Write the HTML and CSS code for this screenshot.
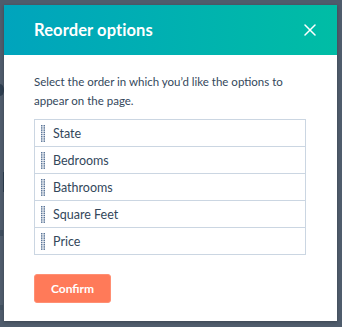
FILE: index.html
```html
<!DOCTYPE html>
<html>
<head>
<meta charset="utf-8">
<link rel="stylesheet" href="styles.css">
</head>
<body>
<div class="backdrop">
  <span class="ghost ghost-dot"></span>
  <span class="ghost ghost-line"></span>
  <span class="ghost ghost-a"></span>
  <span class="ghost ghost-w"></span>
  <div class="modal">
    <div class="header">
      <h1 class="title">Reorder options</h1>
      <button class="close" aria-label="Close">
        <svg width="12" height="12" viewBox="0 0 12 12"><path d="M1 1 L11 11 M11 1 L1 11" stroke="#fff" stroke-width="1.5" stroke-linecap="round"/></svg>
      </button>
    </div>
    <div class="body">
      <p class="intro">Select the order in which you’d like the options to appear on the page.</p>
      <ul class="list">
        <li class="row"><svg class="grip" width="4" height="17" viewBox="0 0 4 17"><g fill="#5a7597"><rect x="0" y="0" width="1.5" height="1.5"/><rect x="2.5" y="0" width="1.5" height="1.5"/><rect x="0" y="2.2" width="1.5" height="1.5"/><rect x="2.5" y="2.2" width="1.5" height="1.5"/><rect x="0" y="4.4" width="1.5" height="1.5"/><rect x="2.5" y="4.4" width="1.5" height="1.5"/><rect x="0" y="6.6" width="1.5" height="1.5"/><rect x="2.5" y="6.6" width="1.5" height="1.5"/><rect x="0" y="8.8" width="1.5" height="1.5"/><rect x="2.5" y="8.8" width="1.5" height="1.5"/><rect x="0" y="11" width="1.5" height="1.5"/><rect x="2.5" y="11" width="1.5" height="1.5"/><rect x="0" y="13.2" width="1.5" height="1.5"/><rect x="2.5" y="13.2" width="1.5" height="1.5"/><rect x="0" y="15.4" width="1.5" height="1.5"/><rect x="2.5" y="15.4" width="1.5" height="1.5"/></g></svg><span class="label">State</span></li>
        <li class="row"><svg class="grip" width="4" height="17" viewBox="0 0 4 17"><g fill="#5a7597"><rect x="0" y="0" width="1.5" height="1.5"/><rect x="2.5" y="0" width="1.5" height="1.5"/><rect x="0" y="2.2" width="1.5" height="1.5"/><rect x="2.5" y="2.2" width="1.5" height="1.5"/><rect x="0" y="4.4" width="1.5" height="1.5"/><rect x="2.5" y="4.4" width="1.5" height="1.5"/><rect x="0" y="6.6" width="1.5" height="1.5"/><rect x="2.5" y="6.6" width="1.5" height="1.5"/><rect x="0" y="8.8" width="1.5" height="1.5"/><rect x="2.5" y="8.8" width="1.5" height="1.5"/><rect x="0" y="11" width="1.5" height="1.5"/><rect x="2.5" y="11" width="1.5" height="1.5"/><rect x="0" y="13.2" width="1.5" height="1.5"/><rect x="2.5" y="13.2" width="1.5" height="1.5"/><rect x="0" y="15.4" width="1.5" height="1.5"/><rect x="2.5" y="15.4" width="1.5" height="1.5"/></g></svg><span class="label">Bedrooms</span></li>
        <li class="row"><svg class="grip" width="4" height="17" viewBox="0 0 4 17"><g fill="#5a7597"><rect x="0" y="0" width="1.5" height="1.5"/><rect x="2.5" y="0" width="1.5" height="1.5"/><rect x="0" y="2.2" width="1.5" height="1.5"/><rect x="2.5" y="2.2" width="1.5" height="1.5"/><rect x="0" y="4.4" width="1.5" height="1.5"/><rect x="2.5" y="4.4" width="1.5" height="1.5"/><rect x="0" y="6.6" width="1.5" height="1.5"/><rect x="2.5" y="6.6" width="1.5" height="1.5"/><rect x="0" y="8.8" width="1.5" height="1.5"/><rect x="2.5" y="8.8" width="1.5" height="1.5"/><rect x="0" y="11" width="1.5" height="1.5"/><rect x="2.5" y="11" width="1.5" height="1.5"/><rect x="0" y="13.2" width="1.5" height="1.5"/><rect x="2.5" y="13.2" width="1.5" height="1.5"/><rect x="0" y="15.4" width="1.5" height="1.5"/><rect x="2.5" y="15.4" width="1.5" height="1.5"/></g></svg><span class="label">Bathrooms</span></li>
        <li class="row"><svg class="grip" width="4" height="17" viewBox="0 0 4 17"><g fill="#5a7597"><rect x="0" y="0" width="1.5" height="1.5"/><rect x="2.5" y="0" width="1.5" height="1.5"/><rect x="0" y="2.2" width="1.5" height="1.5"/><rect x="2.5" y="2.2" width="1.5" height="1.5"/><rect x="0" y="4.4" width="1.5" height="1.5"/><rect x="2.5" y="4.4" width="1.5" height="1.5"/><rect x="0" y="6.6" width="1.5" height="1.5"/><rect x="2.5" y="6.6" width="1.5" height="1.5"/><rect x="0" y="8.8" width="1.5" height="1.5"/><rect x="2.5" y="8.8" width="1.5" height="1.5"/><rect x="0" y="11" width="1.5" height="1.5"/><rect x="2.5" y="11" width="1.5" height="1.5"/><rect x="0" y="13.2" width="1.5" height="1.5"/><rect x="2.5" y="13.2" width="1.5" height="1.5"/><rect x="0" y="15.4" width="1.5" height="1.5"/><rect x="2.5" y="15.4" width="1.5" height="1.5"/></g></svg><span class="label">Square Feet</span></li>
        <li class="row"><svg class="grip" width="4" height="17" viewBox="0 0 4 17"><g fill="#5a7597"><rect x="0" y="0" width="1.5" height="1.5"/><rect x="2.5" y="0" width="1.5" height="1.5"/><rect x="0" y="2.2" width="1.5" height="1.5"/><rect x="2.5" y="2.2" width="1.5" height="1.5"/><rect x="0" y="4.4" width="1.5" height="1.5"/><rect x="2.5" y="4.4" width="1.5" height="1.5"/><rect x="0" y="6.6" width="1.5" height="1.5"/><rect x="2.5" y="6.6" width="1.5" height="1.5"/><rect x="0" y="8.8" width="1.5" height="1.5"/><rect x="2.5" y="8.8" width="1.5" height="1.5"/><rect x="0" y="11" width="1.5" height="1.5"/><rect x="2.5" y="11" width="1.5" height="1.5"/><rect x="0" y="13.2" width="1.5" height="1.5"/><rect x="2.5" y="13.2" width="1.5" height="1.5"/><rect x="0" y="15.4" width="1.5" height="1.5"/><rect x="2.5" y="15.4" width="1.5" height="1.5"/></g></svg><span class="label">Price</span></li>
      </ul>
      <button class="confirm">Confirm</button>
    </div>
  </div>
</div>
</body>
</html>
```

FILE: styles.css
```css
html, body {
  margin: 0;
  padding: 0;
  width: 342px;
  height: 327px;
  overflow: hidden;
}
body {
  font-family: Lato, "Open Sans", sans-serif;
  color: #33475b;
}
.backdrop {
  position: relative;
  width: 342px;
  height: 327px;
  background: #4f5c6c;
  padding: 5px 5px 0 4px;
  box-sizing: border-box;
}
.ghost {
  position: absolute;
  background: #2d3e50;
}
.ghost-dot {
  left: -4px;
  top: 84px;
  width: 8px;
  height: 12px;
  border-radius: 50%;
}
.ghost-line {
  left: 3px;
  top: 172px;
  width: 1px;
  height: 20px;
}
.ghost-a {
  left: 0;
  top: 230px;
  width: 3px;
  height: 6px;
  opacity: 0.5;
}
.ghost-w {
  left: 0;
  top: 305px;
  width: 3px;
  height: 5px;
  opacity: 0.4;
}
.modal {
  position: relative;
  width: 333px;
  height: 316px;
  background: #fff;
  box-shadow: 0 1px 3px rgba(0,0,0,0.25);
  display: flex;
  flex-direction: column;
}
.header {
  height: 50px;
  background: linear-gradient(90deg, #00a4bd 0%, #00bda5 100%);
  display: flex;
  align-items: center;
  justify-content: space-between;
  padding: 0 21px 0 30px;
}
.title {
  margin: 0;
  color: #fff;
  font-size: 16.5px;
  font-weight: 700;
  letter-spacing: 0.1px;
}
.close {
  background: none;
  border: 0;
  padding: 0;
  width: 12px;
  height: 12px;
  display: flex;
  cursor: pointer;
}
.body {
  padding: 17px 30px 0 30px;
}
.intro {
  margin: 0;
  font-size: 11.5px;
  line-height: 19px;
  color: #33475b;
}
.list {
  list-style: none;
  margin: 9px 0 0 0;
  padding: 0;
  border: 1px solid #cbd6e2;
  width: 272px;
  box-sizing: border-box;
}
.row {
  height: 27px;
  display: flex;
  align-items: center;
  border-top: 1px solid #cbd6e2;
  box-sizing: border-box;
  font-size: 12.5px;
}
.row:first-child {
  border-top: 0;
  height: 26px;
}
.grip {
  flex: none;
  margin: 0 8px 0 6px;
}
.label {
  color: #33475b;
}
.confirm {
  margin-top: 19px;
  width: 77px;
  height: 29px;
  border: 1px solid #ff8f73;
  border-radius: 3px;
  background: #ff7a59;
  color: #fff;
  font-family: Lato, "Open Sans", sans-serif;
  font-size: 12px;
  font-weight: 700;
  padding: 0;
}
```
